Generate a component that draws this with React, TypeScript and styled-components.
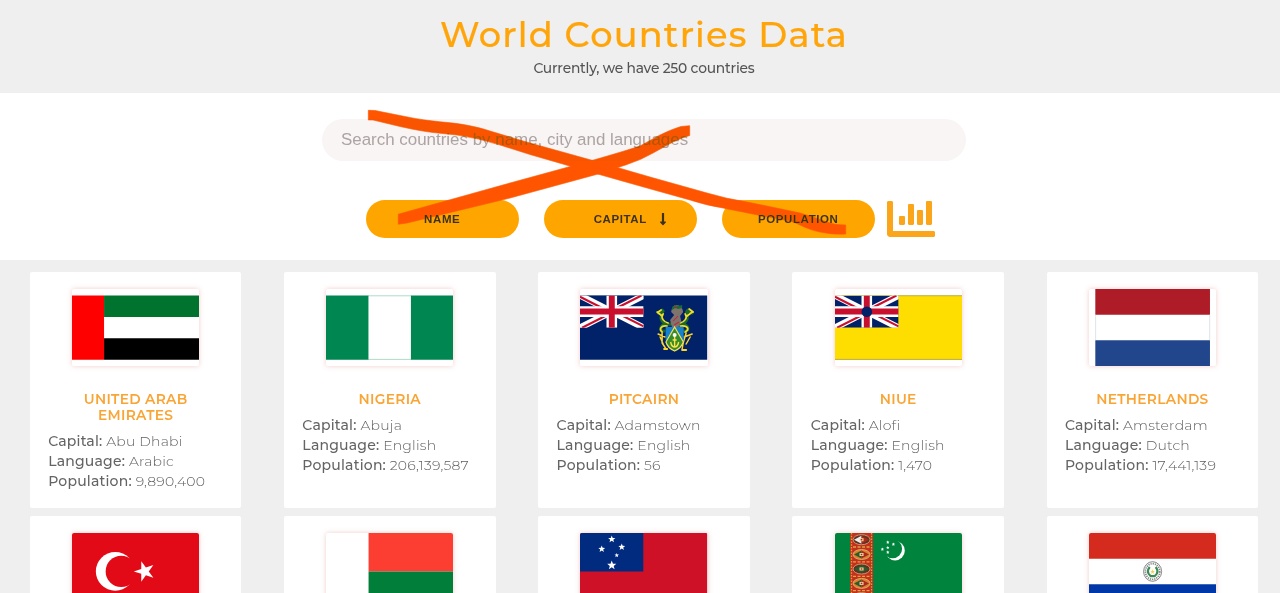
import React from 'react';
import styled, { createGlobalStyle } from 'styled-components';
import { FaChartBar, FaLongArrowAltDown } from 'react-icons/fa';

const GlobalStyle = createGlobalStyle`
  * { box-sizing: border-box; margin: 0; padding: 0; }
  body { background: #efefef; font-family: Montserrat, Inter, sans-serif; }
`;

const Page = styled.div`
  position: relative;
  height: 100vh;
  overflow: hidden;
  background: #efefef;
`;

const Header = styled.header`
  height: 93px;
  padding: 13px 0 0 8px;
  display: flex;
  flex-direction: column;
  align-items: center;
`;

const Title = styled.h1`
  font-size: 35.2px;
  line-height: 44px;
  font-weight: 500;
  letter-spacing: 1.2px;
  color: #ffa50a;
  -webkit-text-stroke: 0.2px #ffa50a;
  white-space: nowrap;
`;

const Subtitle = styled.p`
  margin-top: 1px;
  font-size: 13.8px;
  line-height: 20px;
  font-weight: 500;
  letter-spacing: -0.2px;
  color: #545454;
  white-space: nowrap;
`;

const Controls = styled.section`
  height: 167px;
  padding: 26px 0 0 8px;
  display: flex;
  flex-direction: column;
  align-items: center;
  background: #fff;
`;

const SearchInput = styled.input`
  width: 644px;
  height: 41.5px;
  padding: 0 19px;
  border: 0;
  border-radius: 21px;
  outline: 0;
  background: #f9f5f5;
  font: 16.93px 'Liberation Sans', Arial, sans-serif;
  color: #333;
  &::placeholder { color: #aea3a3; opacity: 1; }
`;

const SortRow = styled.div`
  height: 48px;
  margin-top: 34.9px;
  display: flex;
  align-items: center;
`;

const SortButton = styled.button`
  position: relative;
  width: 153px;
  height: 38px;
  margin: 0 12.5px;
  border: 0;
  border-radius: 19px;
  background: #ffa500;
  font: bold 11.5px 'Liberation Sans', Arial, sans-serif;
  letter-spacing: 0.6px;
  text-transform: uppercase;
  color: #3c3222;
`;

const SortArrow = styled(FaLongArrowAltDown)`
  position: absolute;
  right: 27px;
  top: 11.5px;
  font-size: 14px;
`;

const ChartIcon = styled(FaChartBar)`
  display: block;
  margin: 0 0 1px -0.5px;
  font-size: 48px;
  color: #faa51a;
`;

const Grid = styled.main`
  padding: 12.3px 0 0 8px;
  display: grid;
  grid-template-columns: repeat(5, 211.7px);
  column-gap: 42.5px;
  row-gap: 8.4px;
  justify-content: center;
`;

const Card = styled.article`
  height: 235.6px;
  padding: 16.5px 18.4px 0;
  background: #fff;
  border-radius: 2px;
`;

const FlagFrame = styled.div`
  width: 127.2px;
  height: 77px;
  margin: 0 auto 25.2px;
  overflow: hidden;
  border-radius: 2px;
  background: #fff;
  box-shadow: 0 0 5px rgba(222, 120, 120, 0.38);
  > svg { display: block; width: 100%; height: 100%; }
`;

const CountryName = styled.h2`
  margin: 0 16px 9.2px;
  font-size: 13.8px;
  line-height: 16px;
  font-weight: 600;
  letter-spacing: 0.3px;
  text-align: center;
  text-transform: uppercase;
  color: #f9a535;
`;

const Fact = styled.p`
  font-size: 14px;
  line-height: 19.8px;
  font-weight: 300;
  letter-spacing: 0.2px;
  white-space: nowrap;
  color: #606060;
  b { font-weight: 500; color: #646464; }
`;

const Scribble = styled.svg`
  position: absolute;
  left: 360px;
  top: 100px;
  width: 500px;
  height: 145px;
  pointer-events: none;
  mix-blend-mode: darken;
`;

function starPoints(cx: number, cy: number, r: number, turn = -90, inner = 0.382) {
  return Array.from({ length: 10 }, (_, i) => {
    const a = ((turn + i * 36) * Math.PI) / 180;
    const d = i % 2 ? r * inner : r;
    return `${(cx + d * Math.cos(a)).toFixed(2)},${(cy + d * Math.sin(a)).toFixed(2)}`;
  }).join(' ');
}

const FlagSvg = ({ children }: { children: React.ReactNode }) => (
  <svg viewBox="0 0 127 77" preserveAspectRatio="none">{children}</svg>
);

const UnionJack = () => (
  <svg x="0" y="6.5" width="63.5" height="32.2" viewBox="0 0 60 30" preserveAspectRatio="none">
    <rect width="60" height="30" fill="#012169" />
    <path d="M0 0 60 30M60 0 0 30" stroke="#fff" strokeWidth="6" />
    <path d="M0 1.2 26 14.2M60 28.8 34 15.8M58 0 32 13M2 30 28 17" stroke="#c8102e" strokeWidth="2" />
    <path d="M30 0v30M0 15h60" stroke="#fff" strokeWidth="10" />
    <path d="M30 0v30M0 15h60" stroke="#c8102e" strokeWidth="5.6" />
  </svg>
);

const Emirates = () => (
  <FlagSvg>
    <path d="M32 6.5h95v21.4H32z" fill="#00732f" />
    <path d="M32 49.3h95v21.5H32z" fill="#000" />
    <path d="M0 6.5h32v64.3H0z" fill="#f00" />
  </FlagSvg>
);

const Nigeria = () => (
  <FlagSvg>
    <path d="M42 6.8h43M42 70.4h43" stroke="#8fcab1" strokeWidth=".7" />
    <path d="M0 6.5h42.4v64.2H0zM84.8 6.5H127v64.2H84.8z" fill="#008751" />
  </FlagSvg>
);

const Pitcairn = () => (
  <FlagSvg>
    <path d="M0 6.5h127v64.3H0z" fill="#012169" />
    <UnionJack />
    <g fill="none" strokeLinecap="round" strokeLinejoin="round">
      <path d="M91 35c-5 1-9-1-10-5s3-6 1-9m-4 3 5-2M97 35c5 1 9-1 10-5s-3-6 1-9m4 3-5-2M84 35c-5 3-4 8 0 7m20-7c6 3 4 8 0 7" stroke="#1d6b2a" strokeWidth="3" />
      <path d="M88 34c-4-1-8-5-5-9m-6-2 5 4M100 34c4-1 8-5 5-9m7-2-5 4M81 21l-3 2M109 20l4 3M87 37c-7-1-8 4-5 6m18-6c9-1 9 4 5 6" stroke="#f2dc2c" strokeWidth="1.7" />
      <path d="M82 44v10l4 6m-8-15 7 3m-5 0 3 7M106 44l-3 10-1 6m10-15-8 3m6 0-4 7" stroke="#ffd429" strokeWidth="1.5" />
      <path d="M84 60h3M102 61h4" stroke="#ffd429" strokeWidth="2" />
    </g>
    <path d="M91 23q1-7 5-7 6 0 7 7l-3 4 1 5-3 7h-6l-2-8 4-5z" fill="#80736d" />
    <path d="m92 18 3-2 3 1 4-1v3l-4 1-3-1-3 2z" fill="#176b35" />
    <path d="m94 17 3 1m-4 14 5-5m-4 9 5-3" stroke="#c3263c" strokeWidth="1" />
    <path d="M85.5 38h18v12q0 8-9 12-9-4-9-12z" fill="#1682cb" />
    <path d="m94.5 38 8.7 15q-2 6-8.7 9-7-3-8.7-9z" fill="#378b28" stroke="#f4df61" strokeWidth="1.2" />
    <circle cx="94.5" cy="46" r="2" fill="#fff" />
    <path d="M94.5 48v10m-4-5q1 5 4 5t4-5m-6-2h4" fill="none" stroke="#ffe24a" strokeWidth="1.4" />
  </FlagSvg>
);

const Niue = () => (
  <FlagSvg>
    <path d="M0 6.5h127v64.3H0z" fill="#fedd00" />
    <path d="M63 6.7h64M0 70.4h127" stroke="#a09a45" strokeWidth=".7" />
    <UnionJack />
    <circle cx="31.8" cy="22.7" r="5.3" fill="#012169" />
  </FlagSvg>
);

const Netherlands = () => (
  <FlagSvg>
    <path d="M6.3 0h114.5v25.7H6.3z" fill="#ae1c28" />
    <path d="M6.3 51.2h114.5V77H6.3z" fill="#21468b" />
    <path d="M6.6 25.7v25.5M120.5 25.7v25.5" stroke="#c9d2da" strokeWidth=".6" />
  </FlagSvg>
);

const Turkey = () => (
  <FlagSvg>
    <path d="M0 0h127v77H0z" fill="#e30a17" />
    <circle cx="43.2" cy="38.4" r="19.4" fill="#fff" />
    <circle cx="49.2" cy="38.4" r="15.6" fill="#e30a17" />
    <polygon points={starPoints(72.5, 38.4, 10.8, 180)} fill="#fff" />
  </FlagSvg>
);

const Madagascar = () => (
  <FlagSvg>
    <path d="M42.5 0H127v38.5H42.5z" fill="#fc3d32" />
    <path d="M42.5 38.5H127V77H42.5z" fill="#007e3a" />
  </FlagSvg>
);

const Samoa = () => (
  <FlagSvg>
    <path d="M0 0h127v77H0z" fill="#ce1126" />
    <path d="M0 0h63.2v38.5H0z" fill="#002b7f" />
    {[[31.7, 6.2, 3.8], [21.7, 16, 3.6], [41.7, 14, 3.6], [36.7, 22.3, 2.4], [31.7, 32.3, 4.8]].map(([x, y, r]) => (
      <polygon key={y} points={starPoints(x, y, r, -90, 0.43)} fill="#fff" />
    ))}
  </FlagSvg>
);

const Turkmenistan = () => (
  <FlagSvg>
    <path d="M0 0h127v77H0z" fill="#00843d" />
    <path d="M15 0h23v77H15z" fill="#c3301d" />
    <path d="M16.5 0v77M36.5 0v77" stroke="#d9a13d" strokeWidth="1.3" strokeDasharray="1.5 1.3" />
    {[6.7, 21.5, 36, 50.4, 64.5].map((y, i) => (
      <g key={y}>
        <path d={`M18 ${y + 7.3}h17`} stroke="#e0a23b" strokeWidth="1.3" strokeDasharray="3 1.5" />
        <ellipse cx="26.5" cy={y} rx="8.5" ry="5" fill={i % 2 ? '#d8832b' : '#5f3222'} stroke="#e5c18b" strokeWidth=".7" />
        <path d={`M19 ${y}l7.5-4v8z`} fill={i === 0 ? '#eee' : '#2b5b2a'} />
        <path d={`M34 ${y}l-7.5-4v8z`} fill={i === 2 ? '#2b5b2a' : '#a92a1c'} />
        <rect x="24.5" y={y - 1.5} width="4" height="3" fill="#f2d5a4" />
        <rect x="25.7" y={y - 0.7} width="1.6" height="1.4" fill="#b3261b" />
      </g>
    ))}
    <circle cx="60" cy="17.7" r="9.7" fill="#fff" />
    <circle cx="57.5" cy="15.8" r="9.5" fill="#00843d" />
    {[[52.7, 9.3], [58.3, 11.3], [47.3, 16.3], [52.7, 14.7], [52.7, 19.3]].map(([x, y]) => (
      <polygon key={`${x}-${y}`} points={starPoints(x, y, 1.7, -90, 0.5)} fill="#fff" />
    ))}
  </FlagSvg>
);

const Paraguay = () => (
  <FlagSvg>
    <path d="M0 0h127v25.7H0z" fill="#d52b1e" />
    <path d="M0 51.2h127V77H0z" fill="#0038a8" />
    <ellipse cx="63.5" cy="38.5" rx="9" ry="9.8" fill="#fff" stroke="#555" strokeWidth=".7" />
    <ellipse cx="63.5" cy="38.5" rx="7.2" ry="7.8" fill="none" stroke="#8a8a8a" strokeWidth="1.7" strokeDasharray="1.3 .9" />
    <path d="M60.6 34q-4 5 1 9.2h4q5-4.2 1-9.2" fill="none" stroke="#3c8a57" strokeWidth="2.2" />
    <polygon points={starPoints(63.5, 38.8, 2.6)} fill="#f0d34a" />
  </FlagSvg>
);

interface Country {
  name: string;
  capital: string;
  language: string;
  population: string;
  Flag: React.FC;
}

const countries: Country[] = [
  { name: 'United Arab Emirates', capital: 'Abu Dhabi', language: 'Arabic', population: '9,890,400', Flag: Emirates },
  { name: 'Nigeria', capital: 'Abuja', language: 'English', population: '206,139,587', Flag: Nigeria },
  { name: 'Pitcairn', capital: 'Adamstown', language: 'English', population: '56', Flag: Pitcairn },
  { name: 'Niue', capital: 'Alofi', language: 'English', population: '1,470', Flag: Niue },
  { name: 'Netherlands', capital: 'Amsterdam', language: 'Dutch', population: '17,441,139', Flag: Netherlands },
];

const nextRow: { id: string; Flag: React.FC }[] = [
  { id: 'tr', Flag: Turkey },
  { id: 'mg', Flag: Madagascar },
  { id: 'ws', Flag: Samoa },
  { id: 'tm', Flag: Turkmenistan },
  { id: 'py', Flag: Paraguay },
];

export default function App() {
  return (
    <Page>
      <GlobalStyle />
      <Header>
        <Title>World Countries Data</Title>
        <Subtitle>Currently, we have 250 countries</Subtitle>
      </Header>
      <Controls>
        <SearchInput placeholder="Search countries by name, city and languages" />
        <SortRow>
          <SortButton>Name</SortButton>
          <SortButton>Capital<SortArrow /></SortButton>
          <SortButton>Population</SortButton>
          <ChartIcon />
        </SortRow>
      </Controls>
      <Grid>
        {countries.map(({ name, capital, language, population, Flag }) => (
          <Card key={name}>
            <FlagFrame><Flag /></FlagFrame>
            <CountryName>{name}</CountryName>
            <Fact><b>Capital:</b> {capital}</Fact>
            <Fact><b>Language:</b> {language}</Fact>
            <Fact><b>Population:</b> {population}</Fact>
          </Card>
        ))}
        {nextRow.map(({ id, Flag }) => (
          <Card key={id}>
            <FlagFrame><Flag /></FlagFrame>
          </Card>
        ))}
      </Grid>
      <Scribble viewBox="360 100 500 145" fill="#ff5500" stroke="#ff5500" strokeWidth="0.6">
        <path d="M368.3 110.3Q375 110 380 111.5L410 117.5Q422 120 440 121.8C462 123.5 478 127 490 131L530 143L600 162.5L650 177L707 193Q727 199 747 202L800 213Q814 217 827 222Q834 225 845.7 225V234Q834 235 820 232C806 229 802 225 790 221L763 216L723 208Q705 205 690 200L640 186L580 169L530 154.5L500 145Q478 138 457 135L433 132.5Q420 131 400 126.5L373 120H368.3Z" />
        <path d="M398.3 214.2L510 183L583 163Q622 152 640 146L660 135Q672 129 681 126.5L689.7 125.7V135.5Q681 138 673 142L653 153Q641 160 627 164.5L600 173.5L510 198L407 223L398.3 224.3Z" />
      </Scribble>
    </Page>
  );
}
